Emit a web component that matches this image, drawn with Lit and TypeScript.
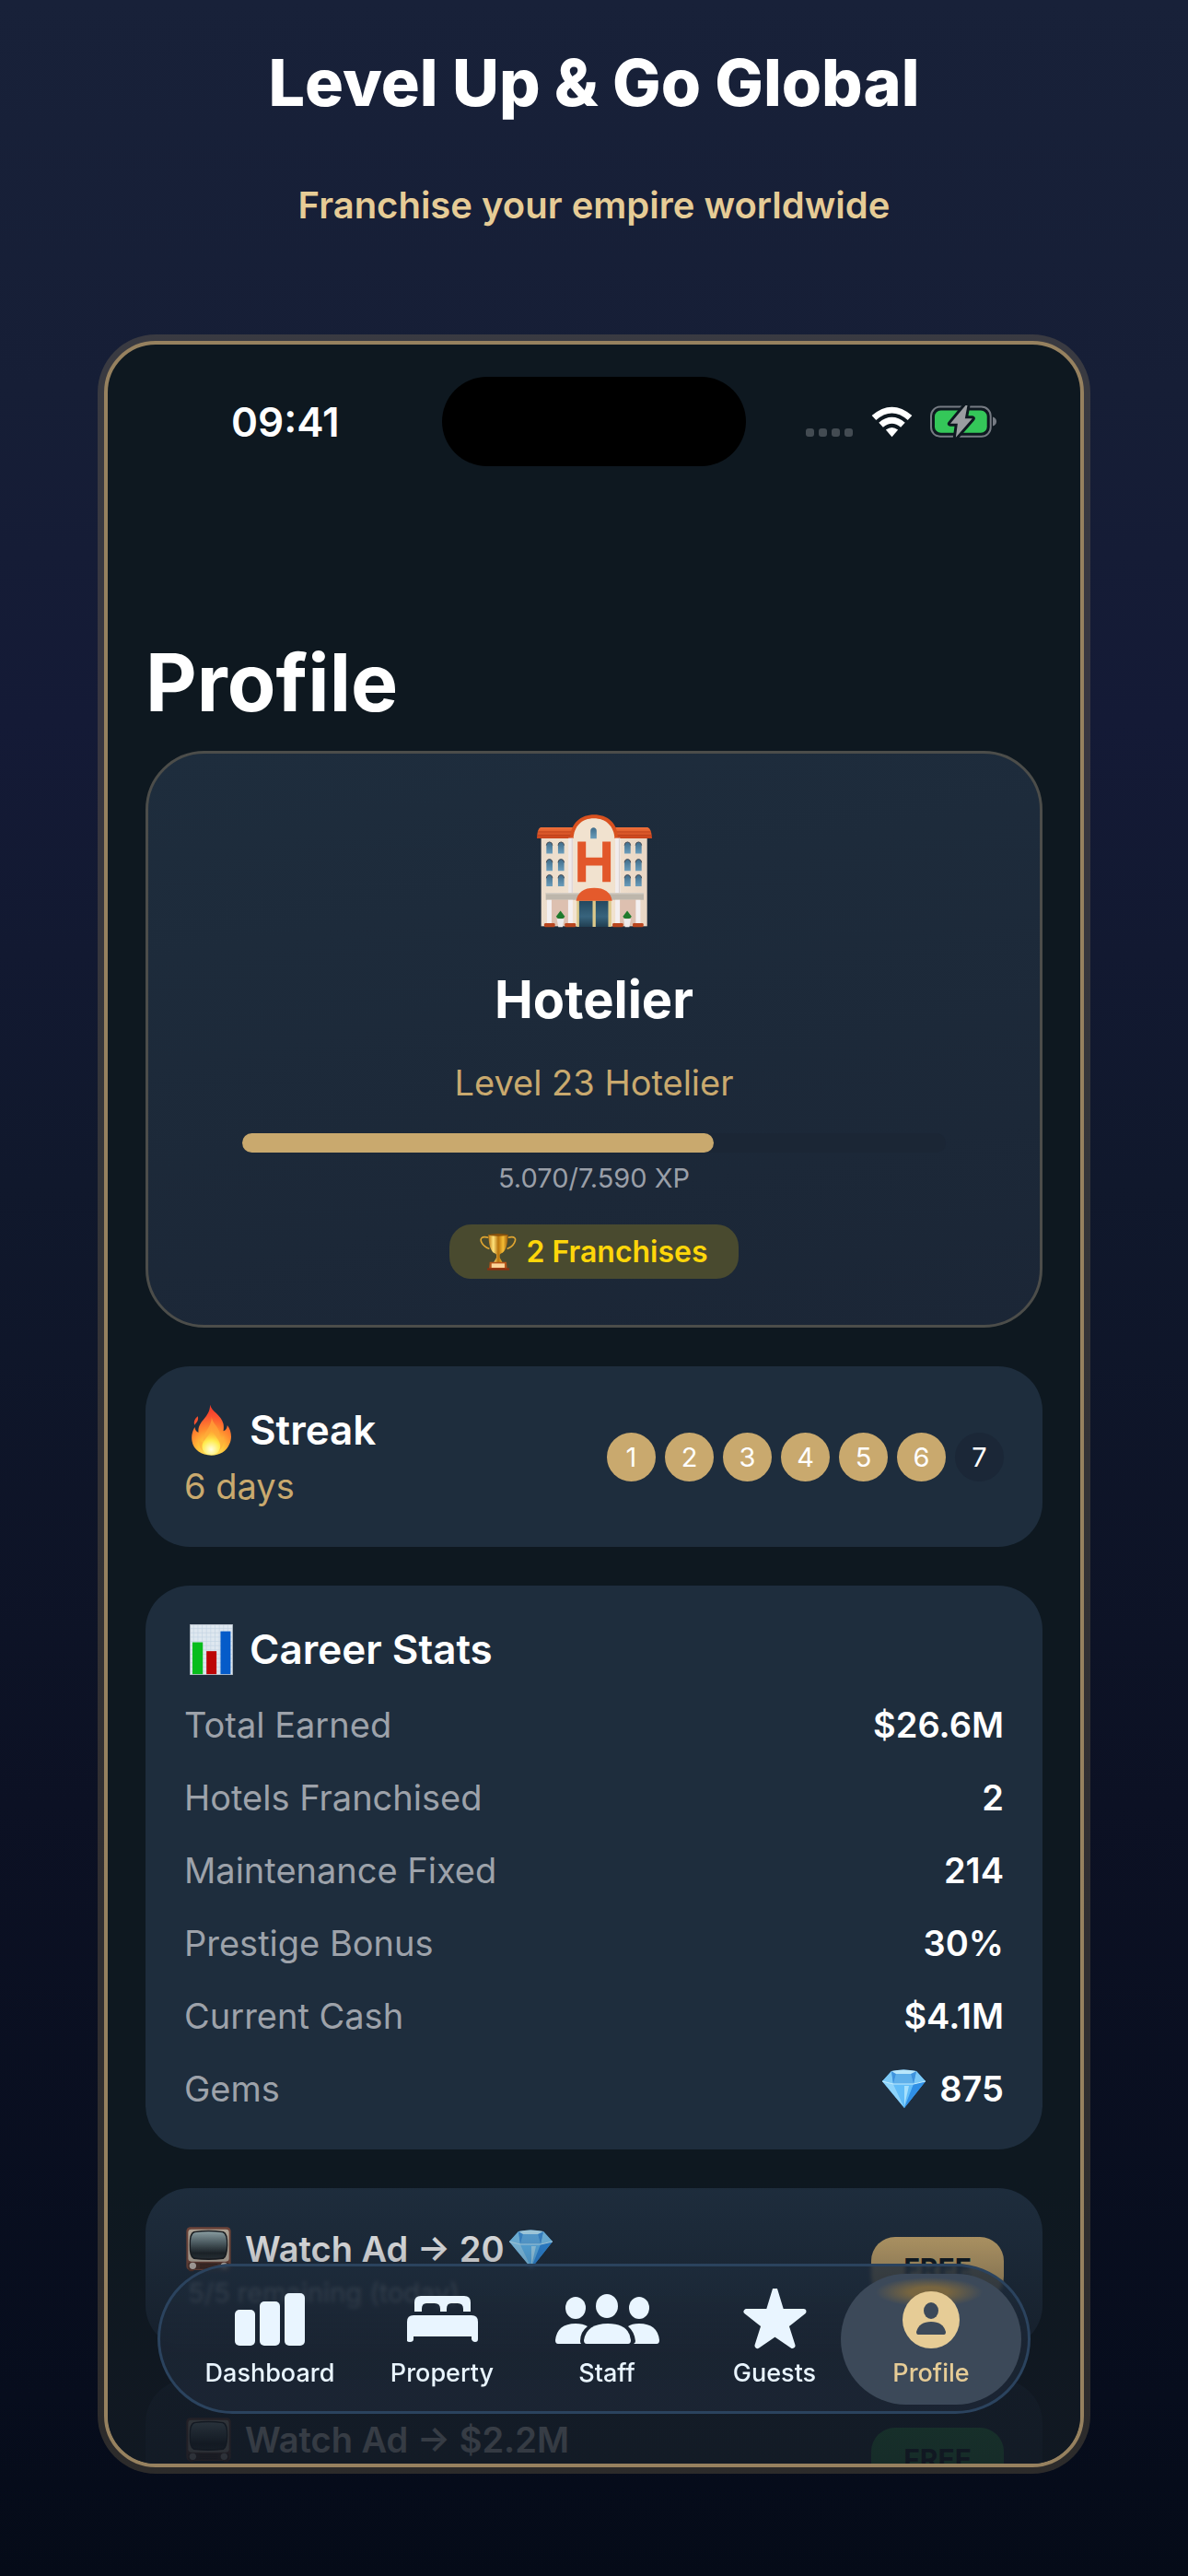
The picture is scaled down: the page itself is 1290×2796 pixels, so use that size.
import { LitElement, html, css, svg } from "lit";
import { customElement, property } from "lit/decorators.js";

const hotelIcon = svg`
  <svg class="hotel" viewBox="125 70 376 370" role="img" aria-label="Hotel">
    <defs>
      <linearGradient id="wall" x1="0" y1="0" x2="1" y2="0">
        <stop offset="0" stop-color="#ecdccb" /><stop offset=".5" stop-color="#f3e5d2" /><stop offset="1" stop-color="#e9d6c4" />
      </linearGradient>
      <linearGradient id="roof" x1="0" y1="0" x2="0" y2="1">
        <stop offset="0" stop-color="#f0703a" /><stop offset="1" stop-color="#c8431c" />
      </linearGradient>
      <linearGradient id="pane" x1="0" y1="0" x2="0" y2="1">
        <stop offset="0" stop-color="#3f6c8a" /><stop offset="1" stop-color="#6b9dbb" />
      </linearGradient>
      <linearGradient id="door" x1="0" y1="0" x2="0" y2="1">
        <stop offset="0" stop-color="#24485f" /><stop offset=".6" stop-color="#38647d" /><stop offset="1" stop-color="#213f52" />
      </linearGradient>
    </defs>
    <rect x="139" y="140" width="346" height="295" fill="url(#wall)" />
    <path d="M137 112h350q12 4 14 36H125q1-32 12-36z" fill="url(#roof)" />
    <path d="M128 127h370M126 138h374" stroke="#b93c18" stroke-width="2.500" />
    <path d="M234 148v-6c4-45 35-71 78-71s74 26 77 71v6z" fill="#d9511f" />
    <path d="M244 435V150c2-42 28-67 67-67s66 25 68 67v285z" fill="#f1e2cf" />
    <rect x="228" y="147" width="15" height="180" fill="#eee9ea" />
    <rect x="381" y="147" width="16" height="180" fill="#f1eced" />
    <path d="M240 147v180M394 147v180" stroke="#cfc4c2" stroke-width="2" />
    <path d="M300 149v-25c0-15 20-15 20 0v25z" fill="url(#pane)" />
    ${[160, 216, 267].map((y) =>
      [156, 194, 411, 447].map(
        (x) => svg`<path d="M${x} ${y + 38}v-27q1-11 10-11t10 11v27z" fill="url(#pane)" /><path d="M${x} ${y + 11}q1-11 10-11t10 11" fill="none" stroke="#4a4f58" stroke-width="3" />`
      )
    )}
    <path d="M258 159h27v52h54v-52h27v131h-27v-53h-54v53h-27z" fill="#e2572a" />
    <rect x="154" y="326" width="320" height="23" fill="#bdb6ab" />
    <rect x="154" y="326" width="320" height="4" fill="#d5cfc6" />
    <rect x="160" y="349" width="70" height="84" fill="#ddc0b0" />
    <rect x="390" y="349" width="70" height="84" fill="#ddc0b0" />
    <g fill="#f3eff0">
      <rect x="158" y="349" width="15" height="78" /><rect x="227" y="349" width="15" height="78" />
      <rect x="381" y="349" width="15" height="78" /><rect x="448" y="349" width="15" height="78" />
    </g>
    <rect x="255" y="349" width="113" height="88" fill="#dcc98b" />
    <rect x="263" y="352" width="44" height="85" fill="url(#door)" />
    <rect x="317" y="352" width="41" height="85" fill="url(#door)" />
    <path d="M253 352q8-42 59-42t59 42z" fill="#e45a2c" />
    <g fill="#b9461f">
      <rect x="149" y="425" width="35" height="13" rx="4" /><rect x="216" y="425" width="36" height="13" rx="4" />
      <rect x="372" y="425" width="35" height="13" rx="4" /><rect x="438" y="425" width="35" height="13" rx="4" />
    </g>
    <g fill="#1f7a2c">
      <path d="M202 384l13 18q2 9-13 9t-13-9z" /><path d="M420 384l13 18q2 9-13 9t-13-9z" />
    </g>
    <path d="M190 411h24l-5 27h-14zM408 411h24l-5 27h-14z" fill="#ece9ea" />
  </svg>`;

const fireIcon = svg`
  <svg class="fire" viewBox="52 612 134 168" aria-hidden="true">
    <defs>
      <radialGradient id="flame" gradientUnits="userSpaceOnUse" cx="118" cy="765" r="135">
        <stop offset="0" stop-color="#fff37a" /><stop offset=".3" stop-color="#ffc53a" />
        <stop offset=".55" stop-color="#ff8a2f" /><stop offset=".85" stop-color="#fb5030" /><stop offset="1" stop-color="#f2402c" />
      </radialGradient>
      <radialGradient id="core" gradientUnits="userSpaceOnUse" cx="118" cy="760" r="60">
        <stop offset="0" stop-color="#fffde0" /><stop offset=".5" stop-color="#ffec4e" /><stop offset="1" stop-color="#ffb52e" stop-opacity=".2" />
      </radialGradient>
    </defs>
    <path d="M115 614c4 22 36 32 43 62 2 10 1 18 0 24 9-3 12-9 13-19 14 18 16 42 7 61-9 24-32 37-59 37-32 0-58-17-63-46-3-17 1-33 9-46 1 9 5 15 12 17-3-39 37-46 38-90z" fill="url(#flame)" />
    <path d="M75 652c3 12-3 20-11 28-4-12 3-22 11-28z" fill="#f4512f" />
    <path d="M120 652c0 24 26 34 27 61 0 9-4 15-4 15s12-2 17-14c4 28-10 60-42 60-28 0-42-22-40-48 4 8 10 11 15 10-2-35 27-45 27-84z" fill="#ffab3a" opacity=".6" />
    <path d="M120 690c3 22 26 34 28 56 1 20-13 31-30 31s-31-11-29-31c2-18 26-30 31-56z" fill="url(#core)" />
  </svg>`;

const chartIcon = svg`
  <svg class="chart" viewBox="48 1328 140 166" aria-hidden="true">
    <rect x="48" y="1328" width="140" height="166" fill="#dfe8f0" />
    <path d="${[60, 74, 88, 102, 116, 130, 144, 158, 172].map((x) => `M${x} 1330v162`).join("")}${[1342, 1356, 1370, 1384, 1398, 1412, 1426, 1440, 1454, 1468, 1482].map((y) => `M50 ${y}h136`).join("")}" stroke="#c3d3e2" stroke-width="2" />
    <rect x="56" y="1387" width="34" height="105" fill="#08bd1d" />
    <rect x="102" y="1416" width="33" height="76" fill="#bd0505" />
    <rect x="148" y="1351" width="33" height="141" fill="#055bc9" />
    <rect x="49" y="1329" width="138" height="164" fill="none" stroke="#a9b3bd" stroke-width="2" />
  </svg>`;

const trophyIcon = svg`
  <svg class="trophy" viewBox="996 52 120 124" aria-hidden="true">
    <defs>
      <linearGradient id="cup" x1="0" y1="0" x2="1" y2="0">
        <stop offset="0" stop-color="#c07a12" /><stop offset=".25" stop-color="#ffe27a" /><stop offset=".5" stop-color="#b8730c" />
        <stop offset=".75" stop-color="#f5bd35" /><stop offset="1" stop-color="#9b5a0a" />
      </linearGradient>
    </defs>
    <path d="M1024 68c-24-6-29 4-22 17 5 10 14 16 25 20M1088 68c24-6 28 4 21 17-5 10-13 16-24 20" fill="none" stroke="#e0a531" stroke-width="5" />
    <path d="M1024 58h64c0 32-8 58-23 62l-4 4v10l8 14v6h-27v-6l8-14v-10l-4-4c-15-4-22-32-22-62z" fill="url(#cup)" />
    <ellipse cx="1056" cy="59" rx="32" ry="4" fill="#8a520b" />
    <path d="M1028 148h55l2 23h-59z" fill="#b4551a" /><rect x="1034" y="153" width="43" height="14" fill="#ffd59a" />
    <path d="M1020 168h72v7h-72z" fill="#8e3010" />
  </svg>`;

const gemIcon = svg`
  <svg class="gem" viewBox="0 0 47 42" aria-label="gems" role="img">
    <path d="M10 2Q23 -1 37 2L47 13 24 42 0 13z" fill="#4fa8ec" />
    <path d="M10 2L0 13l12 3zM37 2l10 11-13 3z" fill="#7cc9f6" />
    <path d="M10 2l5 3-3 11zM37 2l-6 3 3 11z" fill="#3f93dd" />
    <path d="M10 2Q23 -1 37 2L31 5H15z" fill="#b7e6fb" />
    <path d="M15 5h16l3 11H12z" fill="#5fb0ea" />
    <path d="M12 16h22L24 42z" fill="#62bdf8" />
    <path d="M0 13l12 3 12 26z" fill="#8ed4fb" />
    <path d="M47 13l-13 3-10 26z" fill="#2f8fe6" />
    <path d="M24 18l5 0-5 22z" fill="#a6e0fd" />
    <path d="M0 13l12 3h22l13-3" fill="none" stroke="#c2ecff" stroke-width="1" />
  </svg>`;

const tvIcon = svg`
  <svg class="tv" viewBox="97 50 147 147" aria-hidden="true">
    <defs>
      <linearGradient id="tube" x1="0" y1="0" x2="0" y2="1">
        <stop offset="0" stop-color="#9fb5b8" /><stop offset=".4" stop-color="#5c6d72" /><stop offset=".8" stop-color="#1d2428" /><stop offset="1" stop-color="#2c3438" />
      </linearGradient>
    </defs>
    <rect x="98" y="51" width="145" height="140" rx="13" fill="#7b4a3c" />
    <path d="M104 189h20l-3 6h-12zM218 189h20l-4 6h-12z" fill="#5a3529" />
    <rect x="104" y="58" width="133" height="105" rx="10" fill="#c9bba9" />
    <path d="M108 110q-1-40 14-45 48-7 97 0 15 5 14 45t-14 45q-49 6-97 0-15-5-14-45z" fill="#1a1d20" />
    <path d="M112 110q-1-35 13-41 45-6 91 0 14 6 13 41t-13 40q-46 6-91 0-14-5-13-40z" fill="url(#tube)" />
    <rect x="104" y="166" width="133" height="22" rx="5" fill="#523329" />
    <path d="M142 172h58M142 178h58M142 184h58" stroke="#38231d" stroke-width="3" />
    <circle cx="119" cy="177" r="11" fill="#d4c9c0" /><circle cx="221" cy="177" r="11" fill="#d4c9c0" />
  </svg>`;

const wifiIcon = svg`
  <svg class="wifi" viewBox="316 62 136 102" aria-label="Wi-Fi" role="img">
    <path d="M318 92Q384 36 450 92L436 107Q384 62 332 107z" fill="#fff" />
    <path d="M341 115Q384 79 427 115L413 130Q384 106 355 130z" fill="#fff" />
    <path d="M364 139Q384 123 404 139L384 162z" fill="#fff" />
  </svg>`;

const batteryIcon = svg`
  <svg class="battery" viewBox="508 58 220 110" aria-label="Charging" role="img">
    <rect x="511" y="65" width="195" height="97" rx="30" fill="none" stroke="#767b83" stroke-width="6" />
    <path d="M713 98q12 4 12 15t-12 15z" fill="#767b83" />
    <rect x="523" y="77" width="171" height="73" rx="20" fill="#34c759" />
    <path d="M624 60l-50 60h24l-6 45 54-62h-24l8-43z" fill="#9a9da1" stroke="#0e1820" stroke-width="18" stroke-linejoin="round" />
    <path d="M624 60l-50 60h24l-6 45 54-62h-24l8-43z" fill="#9a9da1" />
  </svg>`;

const tabIcons = {
  dashboard: svg`<svg width="76" height="66" viewBox="0 0 76 66" aria-hidden="true"><g fill="currentColor"><rect x="0" y="23" width="22" height="39" rx="5" /><rect x="27" y="14" width="22" height="48" rx="5" /><rect x="54" y="5" width="22" height="57" rx="5" /></g></svg>`,
  property: svg`<svg width="77" height="66" viewBox="0 0 77 66" aria-hidden="true"><path fill="currentColor" d="M8 25V15q0-7 7-7h47q7 0 7 7v10h-8v-3q0-6-6-6H48q-5 0-5 6v3h-7v-3q0-6-6-6H21q-5 0-5 6v3zM7 29h63q7 0 7 7v19q0 3-3 3t-4-3v-3H7v3q0 3-4 3t-3-3V36q0-7 7-7z" /></svg>`,
  staff: svg`<svg width="113" height="66" viewBox="0 0 113 66" aria-hidden="true"><g fill="currentColor"><ellipse cx="22" cy="21" rx="11" ry="12" /><ellipse cx="91" cy="21" rx="11" ry="12" /><ellipse cx="56" cy="19" rx="12" ry="13" /><path d="M34 60h45q3 0 3-4-2-18-25-18T31 56q0 4 3 4z" /><path d="M28 60H3q-3 0-3-4 2-18 22-18 8 0 13 3-8 6-8 16 0 2 1 3zM85 60h25q3 0 3-4-2-18-22-18-8 0-12 3 7 6 8 16 0 2-2 3z" /></g></svg>`,
  guests: svg`<svg width="69" height="66" viewBox="0 -1 68 66" aria-hidden="true"><path fill="currentColor" stroke="currentColor" stroke-width="6" stroke-linejoin="round" d="M34 1L41 24H65L46 39 53 61 34 48 15 61 22 39 3 24H27z" /></svg>`,
  profile: svg`<svg width="62" height="66" viewBox="0 0 62 66" aria-hidden="true"><circle cx="31" cy="34" r="31" fill="currentColor" /><g fill="#3c4959"><ellipse cx="31" cy="24" rx="8" ry="9" /><path d="M17 50q-2 0-2-3 3-11 16-11t16 11q0 3-2 3z" /></g></svg>`,
};

@customElement("stat-card")
export class StatCard extends LitElement {
  static styles = css`
    :host {
      display: block;
      padding: 42px;
      border-radius: 48px;
      background: #1e2d3d;
    }
  `;
  render() {
    return html`<slot></slot>`;
  }
}

@customElement("ad-card")
export class AdCard extends LitElement {
  @property() reward = "";
  @property({ type: Boolean }) gems = false;
  @property() remaining = "";

  static styles = css`
    :host {
      display: flex;
      align-items: center;
      justify-content: space-between;
      padding: 42px;
      border-radius: 48px;
      background: #1e2d3d;
    }
    .title {
      display: flex;
      align-items: center;
      height: 48px;
      margin: 0;
      font-size: 38px;
      line-height: 48px;
      font-weight: 600;
      color: #fff;
    }
    .tv {
      width: 49px;
      height: 49px;
      margin-right: 15px;
      margin-left: 2px;
    }
    .gem {
      width: 47px;
      height: 42px;
      margin-left: 6px;
    }
    .remaining {
      margin: 5px 0 0;
      padding-left: 4px;
      font-size: 29px;
      line-height: 38px;
      color: #c3c9cf;
    }
    .free {
      padding: 0 35px;
      border: 0;
      border-radius: 26px;
      background: #c9a96e;
      color: #0e1820;
      font: inherit;
      font-size: 30px;
      line-height: 69px;
      font-weight: 700;
    }
    .cash {
      background: #34a853;
    }
  `;
  render() {
    return html`
      <div>
        <h3 class="title">${tvIcon}<span>Watch Ad → ${this.reward}</span>${this.gems ? gemIcon : null}</h3>
        <p class="remaining">${this.remaining}</p>
      </div>
      <button class="free ${this.gems ? "" : "cash"}">FREE</button>
    `;
  }
}

@customElement("app-root")
export class AppRoot extends LitElement {
  private stats = [
    ["Total Earned", "$26.6M"],
    ["Hotels Franchised", "2"],
    ["Maintenance Fixed", "214"],
    ["Prestige Bonus", "30%"],
    ["Current Cash", "$4.1M"],
    ["Gems", "875"],
  ];
  private streak = 6;
  private xp = 5070;
  private xpGoal = 7590;
  private tabs: [keyof typeof tabIcons, string][] = [
    ["dashboard", "Dashboard"],
    ["property", "Property"],
    ["staff", "Staff"],
    ["guests", "Guests"],
    ["profile", "Profile"],
  ];

  static styles = css`
    :host {
      display: flex;
      flex-direction: column;
      box-sizing: border-box;
      height: 100vh;
      padding: 46px 113px 118px;
      background: linear-gradient(#182139 0%, #161e36 15%, #141a36 28%, #10182c 46%, #0c1124 70%, #070d1d 93%, #050b18 100%);
      font-family: Inter, "Liberation Sans", sans-serif;
      color: #fff;
    }
    .headline {
      margin: 0;
      text-align: center;
      font-size: 70px;
      line-height: 88px;
      font-weight: 800;
    }
    .tagline {
      margin: 62px 0 120px;
      text-align: center;
      font-size: 40px;
      line-height: 54px;
      font-weight: 600;
      color: #e6cc96;
    }
    .phone {
      position: relative;
      flex: 1;
      min-height: 0;
      overflow: hidden;
      padding: 35px 41px 0;
      border: 4px solid #96815f;
      border-radius: 56px;
      box-shadow: 0 0 0 7px rgba(201, 169, 110, 0.2);
      background: #0e1820;
    }
    .status {
      display: grid;
      grid-template-columns: 1fr 330px 1fr;
      align-items: center;
    }
    .time {
      padding-left: 93px;
      font-size: 44px;
      line-height: 54px;
      font-weight: 600;
    }
    .island {
      height: 97px;
      border-radius: 49px;
      background: #000;
    }
    .signals {
      display: flex;
      align-items: center;
      justify-content: flex-end;
      padding-right: 49px;
    }
    .dots {
      display: flex;
      gap: 5px;
      margin: 24px 20px 0 0;
    }
    .dot {
      width: 9px;
      height: 9px;
      border-radius: 3px;
      background: #434b52;
    }
    .wifi {
      width: 45px;
      height: 34px;
      margin-right: 19px;
    }
    .battery {
      width: 73px;
      height: 37px;
    }
    .screen-title {
      margin: 183px 0 22px;
      font-size: 86px;
      line-height: 104px;
      font-weight: 700;
    }
    .cards {
      display: flex;
      flex-direction: column;
      gap: 42px;
    }
    .ads {
      display: flex;
      flex-direction: column;
      gap: 32px;
    }
    .hero {
      display: flex;
      flex-direction: column;
      align-items: center;
      padding: 66px 102px 50px;
      border: 3px solid #4c4d4a;
      border-radius: 64px;
      background: linear-gradient(170deg, #1e2d3d, #1b2636);
    }
    .hotel {
      width: 125px;
      height: 123px;
    }
    .hero-name {
      margin: 43px 0 31px;
      font-size: 56px;
      line-height: 70px;
      font-weight: 700;
    }
    .level {
      margin: 0 0 31px;
      font-size: 38px;
      line-height: 48px;
      color: #c9a96e;
    }
    .track {
      align-self: stretch;
      height: 21px;
      border-radius: 11px;
      background: #1b2635;
    }
    .fill {
      height: 100%;
      border-radius: 11px;
      background: #c9a96e;
    }
    .xp {
      margin: 11px 0 33px;
      font-size: 29px;
      line-height: 34px;
      color: #9a9fa8;
    }
    .badge {
      display: flex;
      align-items: center;
      gap: 10px;
      padding: 0 33px;
      border-radius: 24px;
      background: #494a2f;
      color: #ffd60a;
      font-size: 32px;
      line-height: 59px;
      font-weight: 600;
    }
    .trophy {
      width: 40px;
      height: 41px;
    }
    .card-title {
      display: flex;
      align-items: center;
      gap: 12px;
      margin: 0;
      font-size: 44px;
      line-height: 54px;
      font-weight: 600;
    }
    .title-icon {
      display: flex;
      align-items: center;
      justify-content: center;
      width: 59px;
      height: 54px;
    }
    .fire {
      flex: none;
      width: 45px;
      height: 56px;
    }
    .chart {
      flex: none;
      width: 47px;
      height: 55px;
    }
    .streak {
      display: flex;
      align-items: center;
      justify-content: space-between;
    }
    .days {
      margin: 10px 0 0;
      font-size: 38px;
      line-height: 48px;
      color: #c9a96e;
    }
    .week {
      display: flex;
      gap: 10px;
      margin: 0;
      padding: 0;
      list-style: none;
    }
    .day {
      width: 53px;
      border-radius: 50%;
      background: #1b2737;
      text-align: center;
      font-size: 29px;
      line-height: 53px;
    }
    .done {
      background: #c9a96e;
    }
    .stats {
      display: flex;
      flex-direction: column;
      gap: 31px;
      margin: 31px 0 0;
    }
    .stat {
      display: flex;
      justify-content: space-between;
      font-size: 38px;
      line-height: 48px;
    }
    .label {
      color: #9da2aa;
    }
    .value {
      display: flex;
      align-items: center;
      gap: 15px;
      margin: 0;
      font-weight: 600;
    }
    .gem {
      width: 47px;
      height: 42px;
    }
    .fade {
      position: absolute;
      right: 0;
      bottom: 0;
      left: 0;
      height: 310px;
      background: linear-gradient(rgba(17, 24, 34, 0), rgba(17, 24, 34, 0.2) 23%, rgba(17, 24, 34, 0.82) 75%, rgba(17, 24, 34, 0.86));
    }
    .tabs {
      position: absolute;
      right: 54px;
      bottom: 54px;
      left: 54px;
      display: grid;
      grid-template-columns: 200fr 174fr 184fr 180fr 160fr;
      box-sizing: border-box;
      height: 163px;
      padding: 8px 25px 7px 19px;
      border: 3px solid #2b435e;
      border-radius: 82px;
      background: linear-gradient(rgba(30, 44, 60, 0.78), rgba(28, 40, 55, 0.78) 30%, rgba(27, 37, 51, 0.95) 60%);
      backdrop-filter: blur(2px);
    }
    .tab {
      display: flex;
      flex-direction: column;
      align-items: center;
      padding-top: 16px;
      border-radius: 72px;
      color: #e9f5ff;
      font-size: 27px;
      line-height: 32px;
      font-weight: 500;
      text-decoration: none;
    }
    .tab-label {
      margin-top: 10px;
    }
    .current {
      margin: 0 -18px;
      background: radial-gradient(58px 16px at 96px 20px, #78653f 35%, rgba(120, 101, 63, 0) 100%), #3c4959;
      color: #e6cc96;
    }
  `;

  render() {
    return html`
      <h1 class="headline">Level Up &amp; Go Global</h1>
      <p class="tagline">Franchise your empire worldwide</p>
      <main class="phone">
        <div class="status">
          <span class="time">09:41</span>
          <span class="island"></span>
          <span class="signals">
            <span class="dots">${[0, 1, 2, 3].map(() => html`<span class="dot"></span>`)}</span>
            ${wifiIcon}${batteryIcon}
          </span>
        </div>
        <h2 class="screen-title">Profile</h2>
        <div class="cards">
          <section class="hero">
            ${hotelIcon}
            <h3 class="hero-name">Hotelier</h3>
            <p class="level">Level 23 Hotelier</p>
            <div class="track" role="progressbar" aria-valuenow=${this.xp} aria-valuemax=${this.xpGoal} aria-label="Experience">
              <div class="fill" style="width: ${Math.round((this.xp / this.xpGoal) * 100)}%"></div>
            </div>
            <p class="xp">5.070/7.590 XP</p>
            <span class="badge">${trophyIcon}<span>2 Franchises</span></span>
          </section>
          <stat-card>
            <div class="streak">
              <div>
                <h3 class="card-title"><span class="title-icon">${fireIcon}</span>Streak</h3>
                <p class="days">${this.streak} days</p>
              </div>
              <ol class="week">
                ${[1, 2, 3, 4, 5, 6, 7].map((d) => html`<li class="day ${d <= this.streak ? "done" : ""}">${d}</li>`)}
              </ol>
            </div>
          </stat-card>
          <stat-card>
            <h3 class="card-title"><span class="title-icon">${chartIcon}</span>Career Stats</h3>
            <dl class="stats">
              ${this.stats.map(
                ([label, value]) => html`
                  <div class="stat">
                    <dt class="label">${label}</dt>
                    <dd class="value">${label === "Gems" ? gemIcon : null}<span>${value}</span></dd>
                  </div>
                `
              )}
            </dl>
          </stat-card>
          <div class="ads">
            <ad-card reward="20" gems remaining="5/5 remaining (today)"></ad-card>
            <ad-card reward="$2.2M" remaining="5/5 remaining (today)"></ad-card>
          </div>
        </div>
        <div class="fade"></div>
        <nav class="tabs" aria-label="Sections">
          ${this.tabs.map(
            ([id, label]) => html`
              <a class="tab ${id === "profile" ? "current" : ""}" href="#${id}">${tabIcons[id]}<span class="tab-label">${label}</span></a>
            `
          )}
        </nav>
      </main>
    `;
  }
}
